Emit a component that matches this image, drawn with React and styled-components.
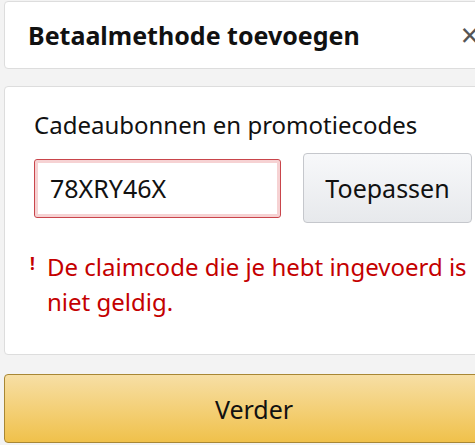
import React from "react";
import styled, { createGlobalStyle } from "styled-components";

const Global = createGlobalStyle`
  html, body { margin: 0; padding: 0; background: #f3f3f3; overflow: hidden; }
  body { font-family: "Noto Sans", "Open Sans", Arial, sans-serif; color: #111; }
`;

const Page = styled.div`
  width: 500px;
  padding: 1px 0 0 4px;
  display: flex;
  flex-direction: column;
`;

const Card = styled.div`
  background: #fff;
  border: 1px solid #dddddd;
  border-radius: 4px;
  box-sizing: border-box;
`;

const HeaderCard = styled(Card)`
  height: 68px;
  display: flex;
  align-items: center;
  padding-left: 23px;
`;

const Title = styled.h1`
  margin: 0;
  font-size: 25px;
  font-weight: 700;
  flex: 1;
`;

const Close = styled.span`
  font-size: 32px;
  color: #555;
  margin-right: 24px;
  line-height: 1;
`;

const FormCard = styled(Card)`
  margin-top: 17px;
  height: 269px;
  padding: 22px 0 0 29px;
`;

const Label = styled.div`
  font-size: 24px;
  line-height: 32px;
`;

const Row = styled.div`
  display: flex;
  align-items: center;
  gap: 22px;
  margin-top: 12px;
`;

const Input = styled.div`
  width: 247px;
  height: 59px;
  box-sizing: border-box;
  border: 1px solid #c9454b;
  border-radius: 3px;
  box-shadow: inset 0 0 0 3px #f6d2d3;
  display: flex;
  align-items: center;
  padding-left: 15px;
  font-size: 25px;
`;

const ApplyButton = styled.div`
  width: 169px;
  height: 70px;
  box-sizing: border-box;
  border: 1px solid #c5c7cc;
  border-radius: 4px;
  background: linear-gradient(#f7f8fa, #e7e9ec);
  display: flex;
  align-items: center;
  justify-content: center;
  font-size: 25px;
`;

const ErrorRow = styled.div`
  display: flex;
  margin-top: 26px;
  margin-left: -4px;
  color: #c40000;
  font-size: 24px;
  line-height: 35px;
`;

const Bang = styled.span`
  width: 17px;
  font-size: 17px;
  font-weight: 700;
  line-height: 30px;
  flex-shrink: 0;
`;

const ErrorText = styled.span`
  width: 428px;
`;

const Continue = styled.div`
  margin-top: 19px;
  height: 69px;
  box-sizing: border-box;
  border: 1px solid #a88734;
  border-radius: 4px;
  background: linear-gradient(#f7dfa5, #f0c14b);
  display: flex;
  align-items: center;
  justify-content: center;
  font-size: 25px;
`;

export default function App() {
  return (
    <>
      <Global />
      <Page>
        <HeaderCard>
          <Title>Betaalmethode toevoegen</Title>
          <Close>×</Close>
        </HeaderCard>
        <FormCard>
          <Label>Cadeaubonnen en promotiecodes</Label>
          <Row>
            <Input>78XRY46X</Input>
            <ApplyButton>Toepassen</ApplyButton>
          </Row>
          <ErrorRow>
            <Bang>!</Bang>
            <ErrorText>De claimcode die je hebt ingevoerd is niet geldig.</ErrorText>
          </ErrorRow>
        </FormCard>
        <Continue>Verder</Continue>
      </Page>
    </>
  );
}
